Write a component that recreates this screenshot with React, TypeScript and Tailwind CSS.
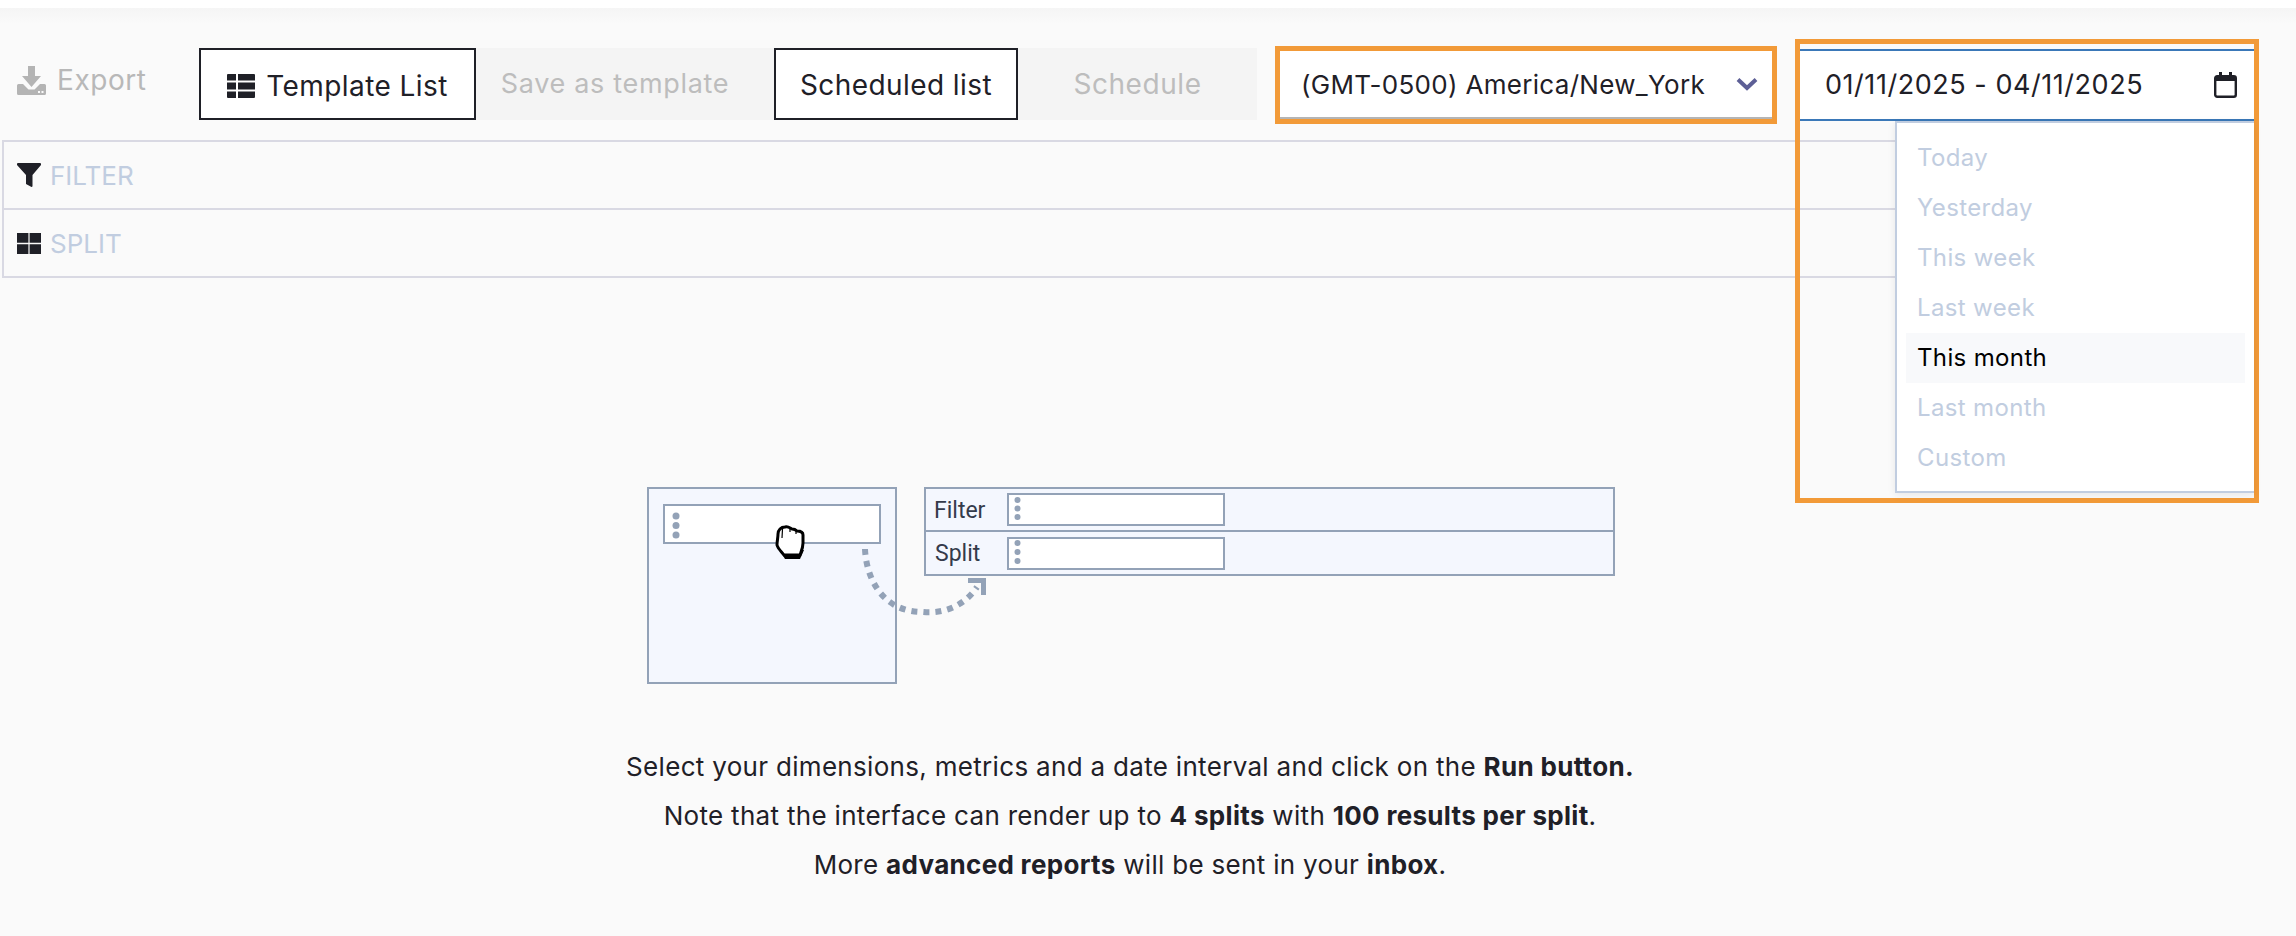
const font = "font-['Inter','Liberation_Sans',sans-serif]";

function ExportIcon() {
  return (
    <svg viewBox="0 0 29 29" className="h-[29px] w-[29px] fill-[#b4b4b4]">
      <path d="M11 0h7v10h6l-9.5 11L5 10h6z" />
      <path
        d="M1.5 18H6l5.5 5.5h6L23 18h4.5A1.5 1.5 0 0 1 29 19.5v8a1.5 1.5 0 0 1-1.5 1.5h-26A1.5 1.5 0 0 1 0 27.500v-8A1.500 1.500 0 0 1 1.500 18zM21 25v2h2v-2zM24.500 25v2h2v-2z"
        fillRule="evenodd"
      />
    </svg>
  );
}

function TableIcon() {
  return (
    <svg viewBox="0 0 28 24" className="h-6 w-7 fill-[#1f2027]">
      <path d="M1 0h8v6.500H0V1a1 1 0 0 1 1-1zM11 0h16a1 1 0 0 1 1 1v5.500H11zM0 8.500h9v7H0zM11 8.500h17v7H11zM0 17.500h9V24H1a1 1 0 0 1-1-1zM11 17.500h17V23a1 1 0 0 1-1 1H11z" />
    </svg>
  );
}

function CalendarIcon() {
  return (
    <svg viewBox="0 0 23 26" className="h-[26px] w-[23px]">
      <rect x="1.200" y="4.200" width="20.600" height="20.600" rx="2" fill="none" stroke="#1f2027" strokeWidth="2.400" />
      <path d="M1 4h21v5H1zM5 0h3v4H5zM15 0h3v4h-3z" fill="#1f2027" />
    </svg>
  );
}

function Illustration() {
  const dots = "#93a2b7";
  return (
    <svg width="1010" height="200" viewBox="645 485 1010 200" className="block">
      <rect x="648" y="488" width="248" height="195" fill="#f4f7fe" stroke={dots} strokeWidth="2" />
      <rect x="664" y="505" width="216" height="38" fill="#fff" stroke={dots} strokeWidth="2" />
      <circle cx="676" cy="516" r="3.500" fill={dots} />
      <circle cx="676" cy="525.500" r="3.500" fill={dots} />
      <circle cx="676" cy="535" r="3.500" fill={dots} />

      <rect x="925" y="488" width="689" height="87" fill="#f4f7fe" stroke={dots} strokeWidth="2" />
      <path d="M925 531h689" stroke={dots} strokeWidth="2" />
      <rect x="1008" y="494" width="216" height="31" fill="#fff" stroke={dots} strokeWidth="2" />
      <rect x="1008" y="538" width="216" height="31" fill="#fff" stroke={dots} strokeWidth="2" />
      <circle cx="1017.500" cy="500" r="3" fill={dots} />
      <circle cx="1017.500" cy="508.500" r="3" fill={dots} />
      <circle cx="1017.500" cy="517" r="3" fill={dots} />
      <circle cx="1017.500" cy="543" r="3" fill={dots} />
      <circle cx="1017.500" cy="552" r="3" fill={dots} />
      <circle cx="1017.500" cy="561" r="3" fill={dots} />
      <text x="934" y="518" fontSize="23" fill="#343b4b" fontFamily="Roboto, sans-serif">Filter</text>
      <text x="935" y="561" fontSize="23" fill="#343b4b" fontFamily="Roboto, sans-serif">Split</text>

      <path
        d="M865 549C866 575 880 612 923 612C945 614 965 605 977 587"
        fill="none"
        stroke={dots}
        strokeWidth="6"
        strokeDasharray="6 6"
      />
      <path d="M968 578h18v17h-5v-12h-13z" fill={dots} />

      {/* grab cursor */}
      <path d="M780 551l5 8h15l4-9z" fill="#000" />
      <path
        d="M778 534C778 530 781 527 785 527C788 526 790 528 792 529C795 529 796 530 797 531C800 531 803 532 803 535L803 543C803 548 801 552 800 555L784 555C782 552 778 549 777 545C777 541 778 538 778 534Z"
        fill="#fff"
        stroke="#000"
        strokeWidth="3"
      />
      <path d="M782.500 529L782 538M790 528.500V532M796 531V534" stroke="#000" strokeWidth="1.200" fill="none" />
    </svg>
  );
}

const options = ["Today", "Yesterday", "This week", "Last week", "This month", "Last month", "Custom"];

export default function App() {
  return (
    <div className={`${font} min-h-[936px] overflow-hidden bg-[#fafafa] text-[#1f2027]`}>
      <div className="h-2 bg-white" />
      <div className="h-4 bg-gradient-to-b from-[#f5f5f5] to-[#fafafa]" />

      <div className="flex h-[116px] items-start">
        <div className="ml-[17px] mt-[40px] flex w-[182px] items-center gap-[11px] text-[28px] leading-8 tracking-[0.02em] text-[#b8b8b8]">
          <ExportIcon />
          <span>Export</span>
        </div>
        <button className="mt-[24px] flex h-[72px] w-[277px] items-center justify-center gap-[11px] border-2 border-[#1f2027] bg-white pt-[3px] text-[28px] tracking-[0.015em]">
          <TableIcon />
          Template List
        </button>
        <button className="mt-[24px] h-[72px] w-[298px] bg-[#f4f4f4] pr-[20px] pt-[1px] text-[27px] tracking-[0.025em] text-[#bdbdbd]">
          Save as template
        </button>
        <button className="mt-[24px] h-[72px] w-[244px] border-2 border-[#1f2027] bg-white pt-[1px] text-[28px] tracking-[0.015em]">
          Scheduled list
        </button>
        <button className="mt-[24px] h-[72px] w-[239px] bg-[#f4f4f4] text-[28px] tracking-[0.02em] text-[#bdbdbd]">
          Schedule
        </button>
        <div className="ml-[18px] mt-[22px] h-[78px] w-[502px] border-[5px] border-[#f29a38] bg-white">
          <div className="flex h-[68px] items-center border-b-2 border-[#b5b5b5] pl-[21px] pr-[14px] text-[26px] tracking-[0.012em]">
            <span className="flex-1">(GMT-0500) America/New_York</span>
            <svg viewBox="0 0 22 14" className="h-[14px] w-[22px]">
              <path d="M2 2.500l9 8.500 9-8.500" fill="none" stroke="#5d5f96" strokeWidth="4" />
            </svg>
          </div>
        </div>
        <div className="relative z-10 ml-[18px] mt-[15px] h-[464px] w-[464px] border-[5px] border-[#f29a38]">
          <div className="mt-[5px] flex h-[72px] items-center justify-between border-y-2 border-[#3a78b8] bg-white pl-[25px] pr-[17px] text-[27px] tracking-[0.02em]">
            <span>01/11/2025 - 04/11/2025</span>
            <CalendarIcon />
          </div>
          <div className="ml-[95px] flex h-[372px] flex-col border-2 border-r-0 border-[#c1cde0] bg-white px-[9px] py-[10px] shadow-[0_2px_8px_rgba(0,0,0,0.08)]">
            {options.map((o) => (
              <div
                key={o}
                className={
                  o === "This month"
                    ? "flex h-[50px] shrink-0 items-center bg-[#f8f9fb] pl-[11px] text-[24px] tracking-[0.015em] text-black"
                    : "flex h-[50px] shrink-0 items-center pl-[11px] text-[24px] tracking-[0.015em] text-[#c1cde0]"
                }
              >
                {o}
              </div>
            ))}
          </div>
        </div>
      </div>

      <div className="ml-[2px] w-[2000px] border-2 border-[#d9d9e3]">
        <div className="flex h-[68px] items-center gap-[9px] border-b-2 border-[#d9d9e3] pl-[13px] text-[26px] text-[#c1cde0]">
          <svg viewBox="0 0 24 24" className="h-6 w-6 fill-[#1f2027]">
            <path d="M1 0h22a1 1 0 0 1 1 1v1l-8.500 10v11a1 1 0 0 1-1 1L9 21v-9L0 2V1a1 1 0 0 1 1-1z" />
          </svg>
          FILTER
        </div>
        <div className="flex h-[66px] items-center gap-[9px] pl-[13px] text-[26px] text-[#c1cde0]">
          <svg viewBox="0 0 24 21" className="h-[21px] w-6 fill-[#1f2027]">
            <path d="M0 0h11.400v9.800H0zM12.600 0H24v9.800H12.600zM0 11.200h11.400V21H0zM12.600 11.200H24V21H12.600z" />
          </svg>
          SPLIT
        </div>
      </div>

      <div className="ml-[645px] mt-[207px]">
        <Illustration />
      </div>

      <div className="mr-[36px] mt-[66px] flex flex-col items-center gap-[17px] text-[26px] leading-8 tracking-[0.012em]">
        <p>
          Select your dimensions, metrics and a date interval and click on the <b>Run button.</b>
        </p>
        <p>
          Note that the interface can render up to <b>4 splits</b> with <b>100 results per split</b>.
        </p>
        <p>
          More <b>advanced reports</b> will be sent in your <b>inbox</b>.
        </p>
      </div>
    </div>
  );
}
